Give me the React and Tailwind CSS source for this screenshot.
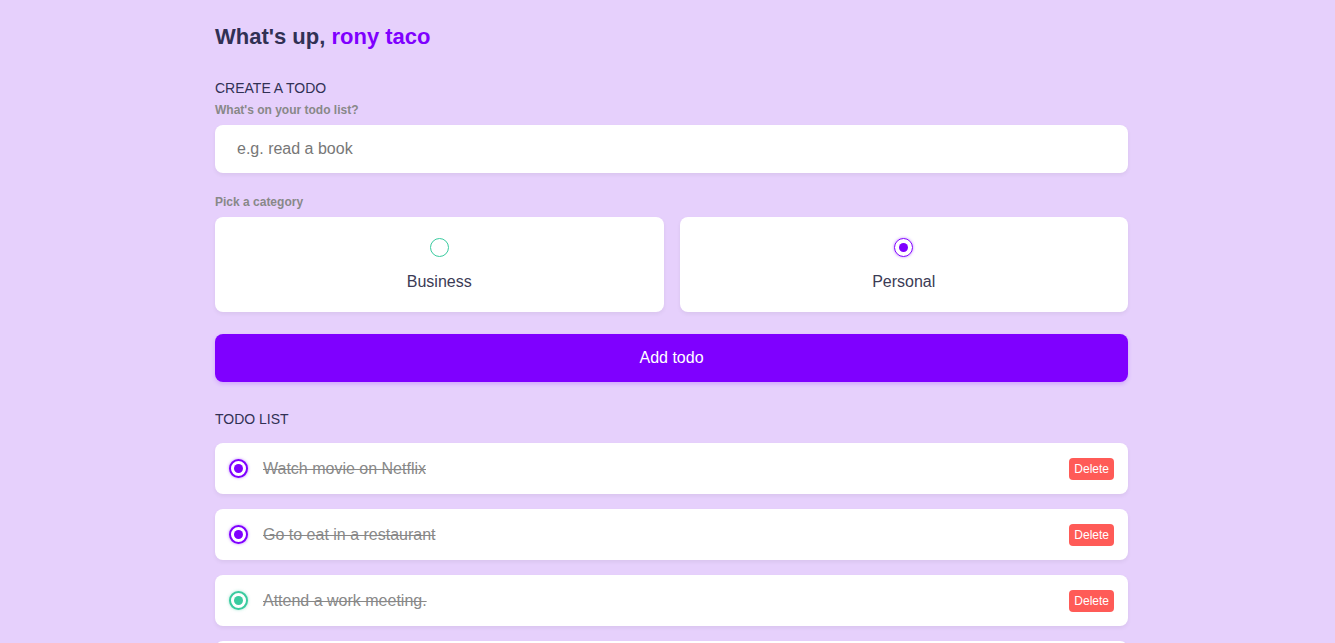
import React from "react";

const todos = [
  { text: "Watch movie on Netflix", cat: "personal" },
  { text: "Go to eat in a restaurant", cat: "personal" },
  { text: "Attend a work meeting.", cat: "business" },
  { text: "Buy groceries", cat: "personal" },
];

function Bubble({ color, checked }) {
  const ring = color === "green" ? "border-[#3acb9f]" : "border-[#7f00ff]";
  const dot = color === "green" ? "bg-[#3acb9f]" : "bg-[#7f00ff]";
  return (
    <span
      className={`flex h-[19px] w-[19px] items-center justify-center rounded-full border-2 ${ring} bg-white ${
        color === "green" ? "shadow-[0_0_3px_rgba(58,203,159,0.5)]" : "shadow-[0_0_3px_rgba(127,0,255,0.5)]"
      }`}
    >
      {checked && <span className={`h-[9px] w-[9px] rounded-full ${dot}`} />}
    </span>
  );
}

export default function App() {
  return (
    <div
      className="min-h-screen bg-[#e6d0fc] pl-[215px] pt-[22px] text-[#313154]"
      style={{ fontFamily: '"Liberation Sans", Arial, sans-serif' }}
    >
      <div className="w-[913px]">
        <h1 className="text-[22px] font-bold leading-[30px] text-[#313154]">
          What's up, <span className="text-[#7f00ff]">rony taco</span>
        </h1>

        <h3 className="mt-[28px] text-[14px] leading-[16px] text-[#313154]">CREATE A TODO</h3>
        <p className="mt-[7px] text-[12px] font-bold leading-[14px] text-[#888888]">What's on your todo list?</p>
        <div className="mt-[8px] flex h-[48px] items-center rounded-[8px] bg-white pl-[22px] shadow-[0_2px_4px_rgba(0,0,0,0.06)]">
          <span className="text-[16px] text-[#777777]">e.g. read a book</span>
        </div>

        <p className="mt-[22px] text-[12px] font-bold leading-[14px] text-[#888888]">Pick a category</p>
        <div className="mt-[8px] grid grid-cols-2 gap-[16px]">
          <div className="flex h-[95px] flex-col items-center rounded-[8px] bg-white pt-[21px] shadow-[0_2px_4px_rgba(0,0,0,0.06)]">
            <span className="h-[19px] w-[19px] rounded-full border-[1.5px] border-[#3acb9f]" />
            <span className="mt-[16px] text-[16px] leading-[18px] text-[#3b3b55]">Business</span>
          </div>
          <div className="flex h-[95px] flex-col items-center rounded-[8px] bg-white pt-[21px] shadow-[0_2px_4px_rgba(0,0,0,0.06)]">
            <span className="flex h-[19px] w-[19px] items-center justify-center rounded-full border-[1.5px] border-[#7f00ff] shadow-[0_0_3px_rgba(127,0,255,0.5)]">
              <span className="h-[9px] w-[9px] rounded-full bg-[#7f00ff]" />
            </span>
            <span className="mt-[16px] text-[16px] leading-[18px] text-[#3b3b55]">Personal</span>
          </div>
        </div>

        <button className="mt-[22px] flex h-[48px] w-full items-center justify-center rounded-[8px] bg-[#7f00ff] text-[16px] text-white shadow-[0_2px_4px_rgba(127,0,255,0.2)]">
          Add todo
        </button>

        <h3 className="mt-[29px] text-[14px] leading-[16px] text-[#313154]">TODO LIST</h3>
        <div className="mt-[16px] flex flex-col gap-[15px]">
          {todos.map((t, i) => (
            <div
              key={i}
              className="flex h-[51px] items-center rounded-[8px] bg-white pl-[14px] pr-[14px] shadow-[0_2px_4px_rgba(0,0,0,0.06)]"
            >
              <Bubble color={t.cat === "business" ? "green" : "purple"} checked />
              <span className="ml-[15px] flex-1 text-[16px] text-[#888888] line-through">{t.text}</span>
              <button className="rounded-[4px] bg-[#ff5b57] px-[5px] py-[4px] text-[12px] leading-[14px] text-white">
                Delete
              </button>
            </div>
          ))}
        </div>
        <div className="h-[40px]" />
      </div>
    </div>
  );
}
